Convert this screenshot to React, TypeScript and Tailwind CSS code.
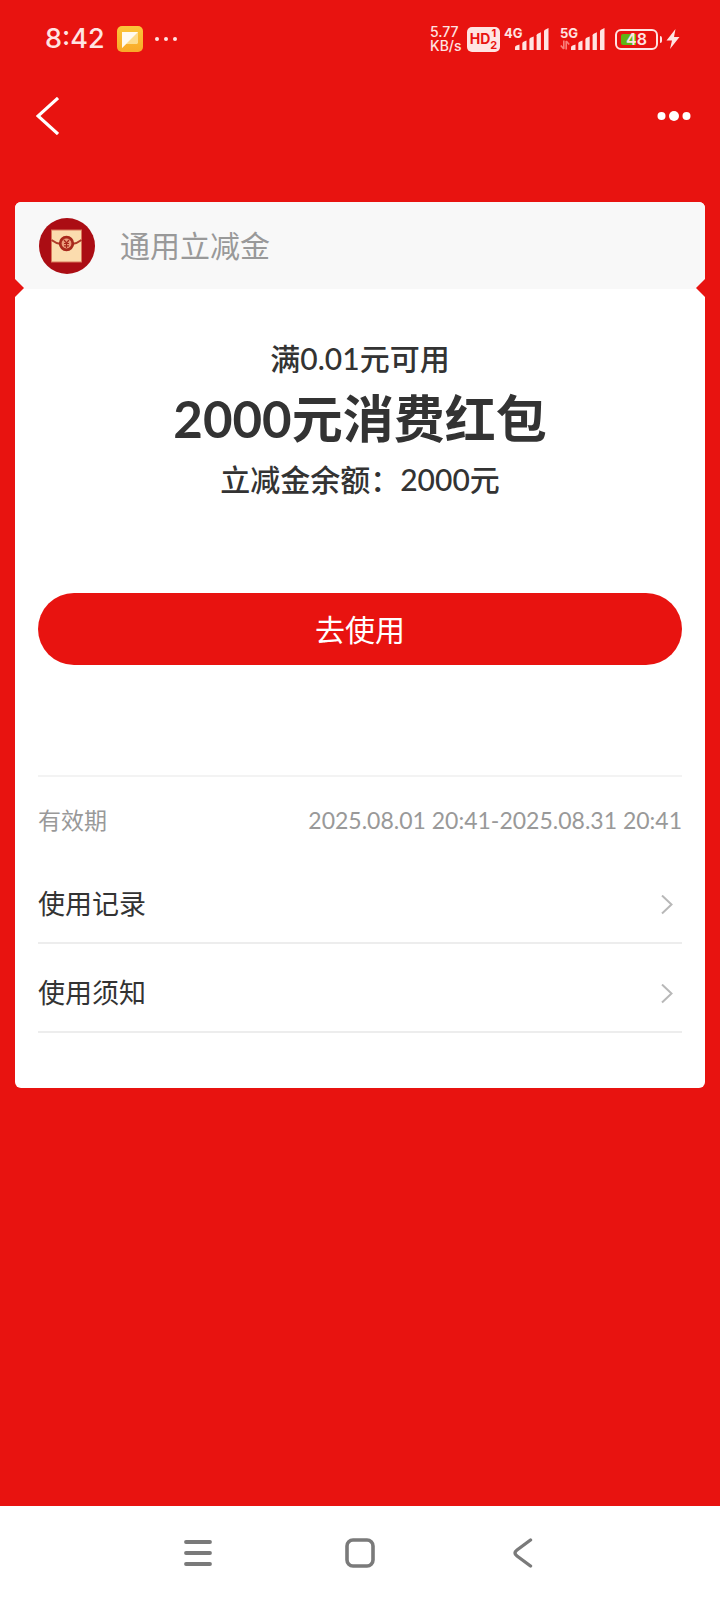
import React from "react";

function SignalBars() {
  return (
    <svg viewBox="0 0 34 22" className="h-[22px] w-[34px] fill-[#ffe4e2]" aria-hidden="true">
      <path d="M0 19.500Q0 18 1.500 17.500L4.500 16.500V22H0Z" />
      <path d="M7.300 15.500Q7.300 14.300 8.500 13.800L11.500 12.500V22H7.300Z" />
      <path d="M14.400 11.500Q14.400 10.300 15.500 9.800L18.700 8.500V22H14.400Z" />
      <path d="M21.600 7.300Q21.600 6.200 22.700 5.700L25.900 4.300V22H21.600Z" />
      <path d="M29 3.300Q29 2.200 30 1.700L33.500 0V22H29Z" />
    </svg>
  );
}

function Signal({ label, traffic }: { label: string; traffic?: boolean }) {
  return (
    <div className="relative flex h-[22px] w-[45px] justify-end">
      <span className="absolute -top-px left-0 text-[13px] leading-[13px] font-bold">{label}</span>
      {traffic && (
        <svg viewBox="0 0 10 10" className="absolute bottom-0 left-0 size-[10px]" aria-hidden="true">
          <path d="M3.800 0.500V9M3.800 9L0.800 5.500M6.200 9.500V1M6.200 1L9.200 4.500" fill="none" stroke="#f8807a" strokeWidth="1.600" />
        </svg>
      )}
      <SignalBars />
    </div>
  );
}

function StatusBar() {
  return (
    <div className="flex h-[78px] items-center justify-between pr-[40px] pl-[45px] font-['Inter',sans-serif] text-[#ffe4e2]">
      <div className="flex items-center gap-[12px]">
        <span className="text-[27px] leading-[30px] font-medium">8:42</span>
        <svg viewBox="0 0 26 26" className="size-[26px]" aria-hidden="true">
          <defs>
            <linearGradient id="note" x1="0" y1="0" x2="0" y2="1">
              <stop offset="0" stopColor="#fbc63a" />
              <stop offset="1" stopColor="#f9a928" />
            </linearGradient>
          </defs>
          <rect width="26" height="26" rx="5" fill="url(#note)" />
          <path d="M5 6H21V17L20 18H9L5 22Z" fill="#fddc8c" />
          <path d="M5 6H21L5 22Z" fill="#fffaf0" />
        </svg>
        <svg viewBox="0 0 22 4" className="h-1 w-[22px] fill-[#ffe4e2]" aria-hidden="true">
          <circle cx="2" cy="2" r="2" />
          <circle cx="11" cy="2" r="2" />
          <circle cx="20" cy="2" r="2" />
        </svg>
      </div>
      <div className="flex items-center">
        <div className="flex w-[37px] flex-col text-[14px] leading-[14px] font-medium">
          <span>5.77</span>
          <span>KB/s</span>
        </div>
        <div className="mr-1 flex h-[25px] w-[33px] items-center justify-center rounded-[5px] bg-[#ffe4e2] text-[#e81310]">
          <span className="text-[14px] leading-[14px] font-bold">HD</span>
          <span className="flex flex-col text-center text-[11px] leading-[12px] font-bold">
            <span>1</span>
            <span>2</span>
          </span>
        </div>
        <Signal label="4G" />
        <div className="w-[11px]" />
        <Signal label="5G" traffic />
        <div className="ml-[10px] flex items-center gap-[2px]">
          <div className="relative flex h-[21px] w-[43px] items-center justify-center rounded-md border-2 border-[#ffe4e2]">
            <div className="absolute top-[3px] left-[4px] h-[11px] w-[15px] rounded-l-[2px] bg-[#5fb514]" />
            <span className="relative text-[16px] leading-[17px] font-semibold">48</span>
          </div>
          <div className="h-[7px] w-[2px] rounded-r bg-[#ffe4e2]" />
        </div>
        <svg viewBox="0 0 14 20" className="ml-1 h-5 w-[14px] fill-[#ffe4e2]" aria-hidden="true">
          <path d="M9.500 0L0.500 11.500H6L4 20L13.500 8H8Z" />
        </svg>
      </div>
    </div>
  );
}

function RedPacket() {
  return (
    <svg viewBox="0 0 56 56" className="size-14" aria-hidden="true">
      <circle cx="28" cy="28" r="28" fill="#ab0d14" />
      <rect x="12.500" y="12" width="30" height="32" fill="#fbdcae" stroke="#d9765a" strokeWidth="1" />
      <path d="M12.500 22Q17 25.500 22 26M42.500 22Q38 25.500 33 26" fill="none" stroke="#b03a27" strokeWidth="2" />
      <circle cx="27.500" cy="25.500" r="6.300" fill="#eb9c7c" stroke="#a8281c" strokeWidth="2.800" />
      <path d="M25 22L27.500 25L30 22M27.500 25V30M25 25.500H30M25 27.800H30" fill="none" stroke="#a8281c" strokeWidth="1.200" />
    </svg>
  );
}

function MenuRow({ label }: { label: string }) {
  return (
    <button type="button" className="flex h-[89px] w-full items-center justify-between border-b-2 border-[#ededed] pt-3 pr-[9px] text-left text-[27px] text-[#333]">
      <span>{label}</span>
      <svg viewBox="0 0 12 20" className="h-5 w-3" aria-hidden="true">
        <path d="M1 0.500L10.500 9.500L1 18.500" fill="none" stroke="#b8b8b8" strokeWidth="2" />
      </svg>
    </button>
  );
}

function Notch({ side }: { side: "left" | "right" }) {
  return (
    <svg viewBox="0 0 9 18" aria-hidden="true" className={side === "left" ? "absolute -bottom-2 left-0 h-[18px] w-[9px]" : "absolute right-0 -bottom-2 h-[18px] w-[9px]"}>
      <path d={side === "left" ? "M0 0L9 9L0 18Z" : "M9 0L0 9L9 18Z"} fill="#e81310" />
    </svg>
  );
}

export default function App() {
  return (
    <div className="flex min-h-screen flex-col bg-[#e81310] font-['Lato','Noto_Sans_CJK_SC',sans-serif]">
      <StatusBar />
      <header className="flex h-[76px] items-center justify-between pr-[29px] pl-[36px]">
        <button type="button" aria-label="返回">
          <svg viewBox="0 0 23 38" className="h-[38px] w-[23px]">
            <path d="M22 1L2 19L22 37" fill="none" stroke="#fff" strokeWidth="3.200" />
          </svg>
        </button>
        <button type="button" aria-label="更多">
          <svg viewBox="0 0 34 10" className="h-[10px] w-[34px] fill-white">
            <circle cx="4.500" cy="5" r="4" />
            <circle cx="17" cy="5" r="5" />
            <circle cx="29.500" cy="5" r="4" />
          </svg>
        </button>
      </header>

      <main className="mx-[15px] mt-12 rounded-md bg-white">
        <div className="relative flex h-[87px] items-center gap-[25px] rounded-t-md bg-[#f8f8f8] pl-6 text-[30px] text-[#999]">
          <RedPacket />
          <h1>通用立减金</h1>
          <Notch side="left" />
          <Notch side="right" />
        </div>
        <div className="px-[23px] pt-[47px] pb-[55px]">
          <section className="text-center font-medium text-[#333]">
            <p className="text-[30px] leading-[44px]">满0.01元可用</p>
            <p className="text-[51px] leading-[78px] font-bold">2000元消费红包</p>
            <p className="text-[30px] leading-[42px]">立减金余额：2000元</p>
          </section>
          <button type="button" className="mt-[93px] h-[72px] w-full rounded-full bg-[#e81310] text-[30px] text-white">
            去使用
          </button>
          <div className="mt-[110px] flex h-20 items-center justify-between border-t-2 border-[#f3f3f3] pt-2 text-[23px] text-[#999]">
            <span>有效期</span>
            <span>2025.08.01 20:41-2025.08.31 20:41</span>
          </div>
          <MenuRow label="使用记录" />
          <MenuRow label="使用须知" />
        </div>
      </main>

      <nav className="mt-auto flex h-[94px] items-center justify-center gap-[132px] bg-white">
        <button type="button" aria-label="最近任务">
          <svg viewBox="0 0 30 30" className="size-[30px]">
            <path d="M3 4H27M3 15H27M3 26H27" stroke="#7a7a7a" strokeWidth="3.800" strokeLinecap="round" />
          </svg>
        </button>
        <button type="button" aria-label="主屏幕">
          <svg viewBox="0 0 30 30" className="size-[30px]">
            <rect x="2" y="2" width="26" height="26" rx="6" fill="none" stroke="#7a7a7a" strokeWidth="3.600" />
          </svg>
        </button>
        <button type="button" aria-label="返回上一级">
          <svg viewBox="0 0 30 30" className="size-[30px]">
            <path d="M23.500 2L10 12Q6 15 10 18L23.500 28" fill="none" stroke="#7a7a7a" strokeWidth="3.400" strokeLinecap="round" strokeLinejoin="round" />
          </svg>
        </button>
      </nav>
    </div>
  );
}
